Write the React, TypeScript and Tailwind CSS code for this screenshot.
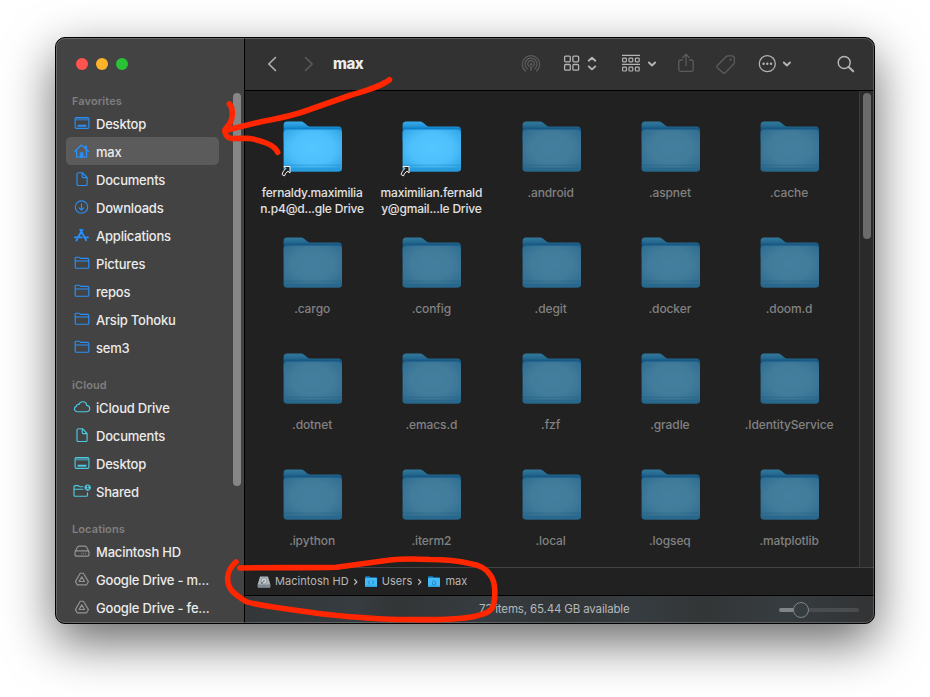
import type { ReactNode } from "react";

const BLUE = "#2a8ff7";
const CYAN = "#4cc9e4";
const GRAY = "#949494";

type IconProps = { color: string };

function Glyph({ color, children }: { color: string; children: ReactNode }) {
  return (
    <svg width="18" height="18" viewBox="0 0 18 18" fill="none" stroke={color} strokeWidth="1.15" strokeLinecap="round" strokeLinejoin="round" className="shrink-0">
      {children}
    </svg>
  );
}

const DesktopIcon = ({ color }: IconProps) => (
  <Glyph color={color}>
    <rect x="2.1" y="3.6" width="13.8" height="10.8" rx="1.3" />
    <path d="M2.5 5.4h13" strokeWidth="2.2" strokeOpacity=".55" strokeLinecap="butt" />
    <path d="M4.6 11.700h8.800" strokeWidth="1.9" strokeLinecap="butt" />
  </Glyph>
);
const HomeIcon = ({ color }: IconProps) => (
  <Glyph color={color}>
    <path d="M1.8 9.2 8.5 3 15.3 9.2M3.6 8v7.1h9.900V8M12.6 6V4.1h.8v2.7" strokeWidth="1.3" />
    <path d="M7.2 15v-4.3h2.8V15z" fill={color} strokeWidth=".8" />
  </Glyph>
);
const DocIcon = ({ color }: IconProps) => (
  <Glyph color={color}>
    <path d="M4 4.100c0-.9.5-1.400 1.400-1.400h4l4.700 4.800v6.700c0 .8-.5 1.300-1.300 1.300H5.300c-.8 0-1.300-.5-1.300-1.300zM9.200 2.900v3.500c0 .8.4 1.200 1.200 1.200h3.500" />
  </Glyph>
);
const DownloadIcon = ({ color }: IconProps) => (
  <Glyph color={color}>
    <circle cx="8.500" cy="9" r="6.200" />
    <path d="M8.500 5.800v6M6.200 9.800l2.300 2.300 2.300-2.300" />
  </Glyph>
);
const AppsIcon = ({ color }: IconProps) => (
  <Glyph color={color}>
    <path d="M9.300 3.900 4.900 11.500M7.300 3.800l5.900 10.400M1.900 11.400h6.900M11.800 11.400h3.200M4.100 13.200l-.7 1.200" strokeWidth="1.900" />
  </Glyph>
);
const FolderLine = ({ color }: IconProps) => (
  <Glyph color={color}>
    <path d="M2.200 4.400c0-.8.5-1.200 1.200-1.200h2.500c1 0 1.300 1.100 2.400 1.100h6.200c.8 0 1.300.5 1.300 1.200v7.400c0 .8-.5 1.300-1.300 1.300H3.500c-.8 0-1.300-.5-1.300-1.300zM2.300 7h13.400" />
  </Glyph>
);
const CloudIcon = ({ color }: IconProps) => (
  <Glyph color={color}>
    <path d="M4.600 13.700C2.900 13.700 1.400 12.500 1.400 10.900c0-1.300.8-2.200 1.900-2.500 0-1.500 1.300-2.400 2.600-1.900C6.600 4.700 7.900 3.700 9.600 3.700c2.300 0 3.900 1.600 4.100 3.700 1.800.3 3 1.500 3 3.100 0 1.900-1.400 3.200-3.300 3.200z" />
  </Glyph>
);
const SharedIcon = ({ color }: IconProps) => (
  <Glyph color={color}>
    <path d="M10 4.700H7.200c-1 0-1.300-1.100-2.300-1.100H2.200c-.7 0-1.200.4-1.200 1.200v8.100c0 .8.500 1.300 1.300 1.300h10.900c.8 0 1.300-.5 1.300-1.300v-2.200M1.200 7.200H10" />
    <circle cx="14.700" cy="5.600" r="2.900" fill={color} strokeWidth=".6" />
    <circle cx="14.700" cy="4.600" r="1" fill="#434343" stroke="none" />
    <path d="M13.300 7.100c.4-1 2.400-1 2.800 0" stroke="#434343" strokeWidth=".9" />
  </Glyph>
);
const DriveIcon = ({ color }: IconProps) => (
  <Glyph color={color}>
    <path d="M2.200 9.300 4.600 5c.4-.7.8-.9 1.500-.9h5.800c.7 0 1.100.2 1.500.9l2.400 4.300M3.300 8.900h11.400c1.800 0 1.800 5.200 0 5.200H3.300c-1.800 0-1.800-5.200 0-5.200z" />
    <path d="M8 11.600h5.500" strokeWidth="1.600" strokeDasharray="1 1" strokeLinecap="butt" strokeOpacity=".6" />
  </Glyph>
);
const GDriveIcon = ({ color }: IconProps) => (
  <Glyph color={color}>
    <path d="M7.200 3.200h3.200l5 8.400-1.800 3.200H4.200L2.400 11.600zM8.800 6.900l2.700 4.600H6.100z" />
  </Glyph>
);

type Row = { label: string; icon: (p: IconProps) => ReactNode; selected?: boolean };

const favorites: Row[] = [
  { label: "Desktop", icon: DesktopIcon },
  { label: "max", icon: HomeIcon, selected: true },
  { label: "Documents", icon: DocIcon },
  { label: "Downloads", icon: DownloadIcon },
  { label: "Applications", icon: AppsIcon },
  { label: "Pictures", icon: FolderLine },
  { label: "repos", icon: FolderLine },
  { label: "Arsip Tohoku", icon: FolderLine },
  { label: "sem3", icon: FolderLine },
];
const icloud: Row[] = [
  { label: "iCloud Drive", icon: CloudIcon },
  { label: "Documents", icon: DocIcon },
  { label: "Desktop", icon: DesktopIcon },
  { label: "Shared", icon: SharedIcon },
];
const locations: Row[] = [
  { label: "Macintosh HD", icon: DriveIcon },
  { label: "Google Drive - m...", icon: GDriveIcon },
  { label: "Google Drive - fe...", icon: GDriveIcon },
];

function Section({ title, rows, color }: { title: string; rows: Row[]; color: string }) {
  return (
    <section className="mb-4">
      <h2 className="flex h-4 items-center pl-1.5 text-[11px] font-semibold tracking-[0.1px] text-[#7f7f7f]">{title}</h2>
      {rows.map(({ label, icon: Icon, selected }) => (
        <div key={label} className={"flex h-7 w-[153px] items-center gap-[5px] rounded-[5px] pl-[7px] " + (selected ? "bg-[#5b5b5b]" : "")}>
          <Icon color={color} />
          <span className="whitespace-nowrap pt-0.5 text-[13px] font-medium leading-5 tracking-[-0.2px] text-[#ebebeb]">{label}</span>
        </div>
      ))}
    </section>
  );
}

function Folder({ bright }: { bright?: boolean }) {
  const id = bright ? "b" : "d";
  return (
    <svg width="60" height="56" viewBox="0 0 60 56" className="block overflow-visible">
      <defs>
        <linearGradient id={"back" + id} gradientUnits="userSpaceOnUse" x1="0" y1="0" x2="0" y2="10">
          <stop offset="0" stopColor={bright ? "#3aaeea" : "#34799e"} />
          <stop offset=".5" stopColor={bright ? "#2497da" : "#266a90"} />
          <stop offset=".8" stopColor={bright ? "#0a7cc6" : "#145583"} />
        </linearGradient>
        <radialGradient id={"front" + id} cx=".5" cy=".45" r=".72">
          <stop offset="0" stopColor={bright ? "#53c6ff" : "#447f9f"} />
          <stop offset=".5" stopColor={bright ? "#4ec1fd" : "#427c9b"} />
          <stop offset="1" stopColor={bright ? "#2b9fdf" : "#2a698e"} />
        </radialGradient>
      </defs>
      <path d="M.6 4Q.6.500 4 .500h13.500c2 0 2.900.6 4.300 1.800l2.400 2Q25.400 5.500 27.500 5.500h28Q59 5.500 59 9V20H.6z" fill={`url(#back${id})`} />
      <path d="M.6 12Q.6 8.500 4 8.500h51.600Q59 8.500 59 12v35Q59 50.500 55.600 50.500H4Q.6 50.500 .6 47z" fill={`url(#front${id})`} />
      <path d="M1 44.200h57.600" stroke={bright ? "#2586bd" : "#2b5f7e"} strokeWidth=".8" opacity=".6" />
      <path d="M.6 46.500h58.400v.5Q59 50.500 55.600 50.500H4Q.6 50.500 .6 47z" fill={bright ? "#2298d9" : "#27668b"} opacity=".8" />
      {bright && (
        <path d="M1 45.500h6v6.500l-2-1.800q-2.500 1.500-3.600 4.800l-2.400-1.600q1-3.500 3.800-5.900z" fill="#222" stroke="#f2f2f2" strokeWidth="1" strokeLinejoin="round" />
      )}
    </svg>
  );
}

const files: { lines: string[]; bright?: boolean }[] = [
  { lines: ["fernaldy.maximilia", "n.p4@d...gle Drive"], bright: true },
  { lines: ["maximilian.fernald", "y@gmail...le Drive"], bright: true },
  ...[
    ".android", ".aspnet", ".cache", ".cargo", ".config", ".degit", ".docker", ".doom.d",
    ".dotnet", ".emacs.d", ".fzf", ".gradle", ".IdentityService", ".ipython", ".iterm2", ".local", ".logseq", ".matplotlib",
  ].map((n) => ({ lines: [n] })),
];

function Toolbar() {
  return (
    <header className="flex h-[53px] shrink-0 items-center border-b border-black bg-[#323232] pl-[22px]">
      <svg width="12" height="18" viewBox="0 0 12 18" fill="none" stroke="#b4b4b4" strokeWidth="1.600" strokeLinecap="round" strokeLinejoin="round"><path d="M8.500 2.500 1.800 9l6.700 6.500" /></svg>
      <svg width="12" height="18" viewBox="0 0 12 18" fill="none" stroke="#5c5c5c" strokeWidth="1.600" strokeLinecap="round" strokeLinejoin="round" className="ml-6"><path d="M2.500 2.500 9.200 9l-6.700 6.500" /></svg>
      <h1 className="ml-[18px] w-[187px] pt-px text-[15px] font-extrabold tracking-[-0.45px] text-[#ececec]">max</h1>
      <svg width="22" height="22" viewBox="0 0 22 22" fill="none" stroke="#5c5c5c" strokeWidth="1.200" strokeLinecap="round">
        <path d="M5.500 18A8.700 8.700 0 1 1 16.500 18M7.300 15.800a6 6 0 1 1 7.400 0M9 13.500a3.300 3.300 0 1 1 4 0" />
        <circle cx="11" cy="11.300" r="1.200" fill="#5c5c5c" stroke="none" /><path d="M11 13.800v3" strokeWidth="1.700" />
      </svg>
      <svg width="36" height="20" viewBox="0 0 36 20" fill="none" stroke="#b4b4b4" strokeWidth="1.300" className="ml-[21px]">
        <rect x="1.600" y="2.100" width="5.700" height="5.700" rx="1" /><rect x="9.900" y="2.100" width="5.700" height="5.700" rx="1" /><rect x="1.600" y="10.500" width="5.700" height="5.700" rx="1" /><rect x="9.900" y="10.500" width="5.700" height="5.700" rx="1" />
        <path d="m25.700 6.700 3.300-3 3.300 3M25.700 12.400l3.300 3 3.300-3" strokeWidth="1.900" strokeLinecap="round" strokeLinejoin="round" />
      </svg>
      <svg width="38" height="20" viewBox="0 0 38 20" fill="none" stroke="#b4b4b4" strokeWidth="1.200" className="ml-[22px]">
        <path d="M1 1.300h18M1 10.300h18" />
        {[1.600, 8, 14.400].map((x) => (
          <g key={x}><rect x={x} y="4.100" width="3.800" height="3.700" rx=".8" /><rect x={x} y="13.100" width="3.800" height="3.900" rx=".8" /></g>
        ))}
        <path d="m27.900 8.500 3.100 3 3.100-3" strokeWidth="1.900" strokeLinecap="round" strokeLinejoin="round" />
      </svg>
      <svg width="18" height="22" viewBox="0 0 18 22" fill="none" stroke="#5c5c5c" strokeWidth="1.300" strokeLinecap="round" strokeLinejoin="round" className="ml-[18px]">
        <path d="M5.500 7H3.600c-1.200 0-1.800.6-1.800 1.800v7.700c0 1.200.6 1.800 1.800 1.800h10.800c1.200 0 1.800-.6 1.800-1.800V8.800c0-1.200-.6-1.800-1.800-1.800h-1.900M9 12.500V1.800M5.800 4.500 9 1.300l3.200 3.200" />
      </svg>
      <svg width="22" height="22" viewBox="0 0 22 22" fill="none" stroke="#5c5c5c" strokeWidth="1.300" strokeLinejoin="round" className="ml-5">
        <path d="M2.400 12.500 11 3.700c.6-.6 1-.8 1.800-.8h4.200c1.600 0 2.300.8 2.300 2.400v4.200c0 .8-.2 1.200-.8 1.800l-8.200 8.300c-.9.9-1.700.9-2.600 0l-5.300-4.700c-.9-.9-.9-1.500 0-2.400z" />
        <circle cx="15.500" cy="6.700" r="1.100" fill="#5c5c5c" stroke="none" />
      </svg>
      <svg width="36" height="20" viewBox="0 0 36 20" fill="none" stroke="#b4b4b4" strokeWidth="1.300" className="ml-[20px]">
        <circle cx="10.300" cy="9.700" r="8" /><g fill="#b4b4b4" stroke="none"><circle cx="6.600" cy="9.700" r="1.200" /><circle cx="10.300" cy="9.700" r="1.200" /><circle cx="14" cy="9.700" r="1.200" /></g>
        <path d="m26.800 8.500 3.100 3 3.100-3" strokeWidth="1.900" strokeLinecap="round" strokeLinejoin="round" />
      </svg>
      <svg width="20" height="20" viewBox="0 0 20 20" fill="none" stroke="#b4b4b4" strokeLinecap="round" className="ml-[43px]">
        <circle cx="8.200" cy="8.500" r="6" strokeWidth="1.500" /><path d="m12.700 13 4.500 4.300" strokeWidth="2.100" />
      </svg>
    </header>
  );
}

function MiniFolder({ house }: { house?: boolean }) {
  return (
    <svg width="14" height="13" viewBox="0 0 14 13" className="mr-[4px]">
      <path d="M1 2.500Q1 1.200 2.200 1.200h3.300l1.200 1H12q1 0 1 1V6H1z" fill="#1682c6" />
      <rect x="1" y="3" width="12" height="9" rx="1" fill="#46baf8" /><path d="M1 10.500h12V11q0 1-1 1H2q-1 0-1-1z" fill="#2da1e2" />
      {house ? <path d="m4.800 7.500 2.200-2 2.200 2M5.500 7.200v2.500h3V7.200" stroke="#1b88c7" fill="none" strokeWidth=".9" /> : <path d="M5.500 5.500q-2 2 0 4M8.500 5.500q2 2 0 4" stroke="#1b88c7" fill="none" />}
    </svg>
  );
}

function Chevron() {
  return <svg width="6" height="8" viewBox="0 0 6 8" fill="none" stroke="#bcbcbc" strokeWidth="1.300" className="mx-[4.500px] mt-px"><path d="m1.300 1.200 2.500 2.700-2.500 2.700" /></svg>;
}

function PathBar() {
  return (
    <nav className="flex h-[29px] shrink-0 items-center border-y border-b-black border-t-[#434343] bg-[#212121] pl-3 text-[11px] tracking-[0.05px] text-[#b8b8b8]">
      <svg width="14" height="14" viewBox="0 0 14 14" className="mr-[4px]">
        <path d="M3 1.500h8L13.200 9v3q0 .6-.6.6H1.400q-.6 0-.6-.6V9z" fill="#aeb7bb" /><path d="M.8 9.500h12.400V12q0 .6-.6.600H1.400Q.8 12.600.8 12z" fill="#7e8a91" />
        <circle cx="7" cy="6" r="3" fill="#ced4d6" stroke="#717c82" strokeWidth=".6" /><circle cx="7" cy="6" r=".8" fill="#566067" /><path d="m4 8.500 2.500-2" stroke="#4c555a" />
      </svg>
      <span>Macintosh HD</span><Chevron />
      <MiniFolder /><span>Users</span><Chevron />
      <MiniFolder house /><span>max</span>
    </nav>
  );
}

export default function App() {
  return (
    <div className="relative h-[697px] w-[930px] overflow-hidden bg-white px-[55px] pt-[37px] font-['Inter',sans-serif]">
      <main className="relative flex h-[587px] w-[820px] overflow-hidden rounded-[10px] border border-black bg-[#212121] shadow-[0_18px_50px_rgba(0,0,0,0.6)]">
        <aside className="relative w-[189px] shrink-0 border-r border-black bg-[#434343] pl-2.5">
          <div className="flex gap-2 pl-2.5 pt-5">
            <i className="size-3 rounded-full bg-[#ff5350]" />
            <i className="size-3 rounded-full bg-[#fdb429]" />
            <i className="size-3 rounded-full bg-[#28c138]" />
          </div>
          <div className="mt-[23px]">
            <Section title="Favorites" rows={favorites} color={BLUE} />
            <Section title="iCloud" rows={icloud} color={CYAN} />
            <Section title="Locations" rows={locations} color={GRAY} />
          </div>
          <div className="absolute right-[3px] top-[55px] h-[393px] w-2 rounded-full bg-[#868686]" />
        </aside>
        <div className="flex min-w-0 flex-1 flex-col">
          <Toolbar />
          <div className="flex min-h-0 flex-1">
            <div className="grid w-[614px] shrink-0 auto-rows-[116px] grid-cols-[repeat(5,119.25px)] content-start pl-[7.500px] pt-[30px]">
              {files.map(({ lines, bright }) => (
                <div key={lines[0]} className={"flex flex-col items-center text-[12px] font-medium leading-4 " + (bright ? "text-[#e2e2e2]" : "text-[#828282]")}>
                  <div className="mb-[8px] pl-[2px]"><Folder bright={bright} /></div>
                  {lines.map((l) => <span key={l} className={"whitespace-nowrap " + (bright ? "tracking-[-0.2px]" : "tracking-[-0.1px]")}>{l}</span>)}
                </div>
              ))}
            </div>
            <div className="flex-1 border-l border-[#3b3b3b] bg-[#2a2a2a] pl-[3px] pt-0.5">
              <div className="h-[146px] w-2 rounded-full bg-[#6b6b6b]" />
            </div>
          </div>
          <PathBar />
          <footer className="flex h-[27px] shrink-0 items-center bg-[linear-gradient(90deg,#343739,#363c40_18%,#333536_24%,#363c40_38%,#333637_50%,#363c40_62%,#333637_73%,#363c40_86%,#323334)] pl-[234px]">
            <span className="w-[300px] whitespace-nowrap pt-px text-[11.500px] tracking-[-0.15px] text-[#b5b8ba]">73 items, 65.44 GB available</span>
            <div className="flex items-center">
              <div className="h-1 w-3.5 rounded-l-full bg-[#7e8488]" />
              <div className="size-4 rounded-full border border-[#81878a] bg-[#363d41]" />
              <div className="h-1 w-[50px] rounded-r-full bg-[#4a4d50]" />
            </div>
          </footer>
        </div>
        <div className="pointer-events-none absolute inset-0 rounded-[9px] border border-white/20" />
      </main>
      <svg className="pointer-events-none absolute left-0 top-0" width="930" height="697" viewBox="0 0 930 697" fill="none" stroke="#ff2600" strokeWidth="5.600" strokeLinecap="round" strokeLinejoin="round">
        <path d="M389.500 79.700C380 87 365 91 351 95L304 111.500C285 118 270 119.500 256.700 122.700L225 130.500" />
        <path d="M229.300 104C233 107 233 116 230.800 121.500C229 126 224 128 225 132C226 137 228 138.500 233 138.500L247 138.300C260 139.500 275 145 277.700 152.300" />
        <path d="M236 562C228 569 226 578 229 586C232 594 240 597 246 601.500C258 606 275 607 323 614C350 617 385 619.500 407 619.500C435 620 462 619 474 616.500C484 614 492 612 493.500 605C496 594 495 582 491 576C487 569 481 565 470 563.500C455 560 442 559.500 430 559.500C412 558.500 400 558.800 390 560L336.700 567.200C305 568 275 567.200 240 568" />
      </svg>
    </div>
  );
}
